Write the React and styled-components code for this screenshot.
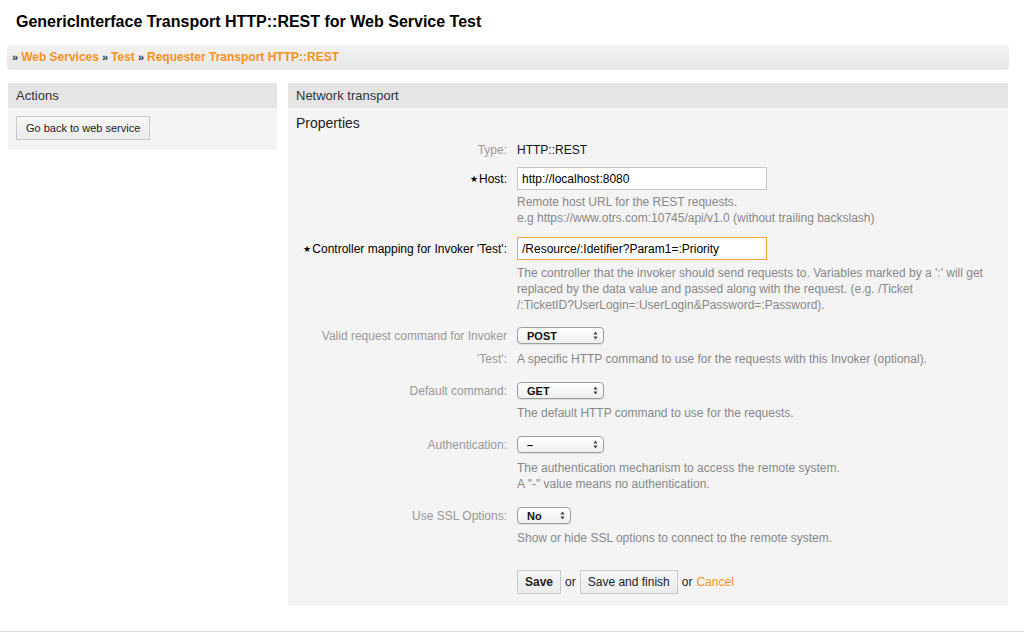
import React from "react";
import styled, { createGlobalStyle } from "styled-components";

const Global = createGlobalStyle`
  html, body { margin: 0; padding: 0; background: #fff; }
  body { font-family: "Liberation Sans", Arial, sans-serif; font-size: 12px; color: #000; }
  * { box-sizing: border-box; }
`;

const Page = styled.div`
  width: 1024px;
  height: 632px;
  overflow: hidden;
  display: flex;
  flex-direction: column;
`;

const Title = styled.h1`
  margin: 0;
  padding: 13px 0 0 16px;
  height: 45px;
  font-size: 16px;
  font-weight: bold;
  color: #000;
  line-height: 18px;
`;

const Breadcrumb = styled.div`
  margin: 0 15px 0 7px;
  height: 24px;
  border-radius: 4px;
  background: linear-gradient(#f1f2f1, #e6e8e7);
  box-shadow: 0 1px 1px rgba(0,0,0,0.08);
  display: flex;
  align-items: center;
  padding-left: 5px;
  font-weight: bold;
  font-size: 12px;
`;

const Sep = styled.span`
  color: #333;
  font-size: 11px;
  margin: 0 3px 0 0;
`;

const Crumb = styled.a`
  color: #f7921e;
  text-decoration: none;
  margin-right: 3px;
`;

const Columns = styled.div`
  display: flex;
  align-items: flex-start;
  gap: 11px;
  margin: 14px 16px 0 8px;
`;

const Box = styled.section`
  background: #f4f4f4;
  width: ${(p) => p.$width || "auto"};
  flex: ${(p) => (p.$grow ? "1" : "none")};
`;

const BoxHeader = styled.div`
  height: 25px;
  background: #e5e5e5;
  color: #333;
  font-size: 13px;
  line-height: 25px;
  padding-left: 8px;
`;

const BoxBody = styled.div`
  padding: ${(p) => p.$pad || "8px"};
`;

const Button = styled.button`
  font-family: "Liberation Sans", Arial, sans-serif;
  font-size: ${(p) => p.$fs || 12}px;
  font-weight: ${(p) => (p.$primary ? "bold" : "normal")};
  color: #222;
  height: 24px;
  padding: 0 ${(p) => p.$px || 8}px;
  border: 1px solid #c9c9c9;
  background: linear-gradient(#f6f6f6, #ececec);
  border-radius: 0;
  cursor: pointer;
`;

const Heading = styled.h2`
  margin: 0;
  font-size: 14px;
  font-weight: normal;
  color: #222;
  line-height: 18px;
`;

const Row = styled.div`
  display: grid;
  grid-template-columns: 211px 1fr;
  column-gap: 10px;
  align-items: center;
  margin-top: ${(p) => p.$mt || 0}px;
`;

const Label = styled.div`
  text-align: right;
  color: ${(p) => (p.$required ? "#000" : "#999")};
  font-size: 12px;
  line-height: 16px;
  white-space: nowrap;
`;

const Star = styled.span`
  font-size: 9px;
  margin-right: 1px;
  vertical-align: 1px;
`;

const Value = styled.div`
  font-size: 12px;
  line-height: 16px;
  color: #111;
`;

const Hint = styled.div`
  color: #888;
  font-size: 12px;
  line-height: 16px;
`;

const TextInput = styled.input`
  width: 250px;
  height: 23px;
  border: 1px solid ${(p) => (p.$error ? "#f7a040" : "#c6c6c6")};
  background: #fff;
  font-family: "Liberation Sans", Arial, sans-serif;
  font-size: 12px;
  color: #000;
  padding: 0 4px;
  outline: none;
  display: block;
`;

const SelectBox = styled.div`
  width: ${(p) => p.$w}px;
  height: 17px;
  border: 1px solid #9e9e9e;
  border-radius: 4px;
  background: linear-gradient(#ffffff, #efefef);
  box-shadow: 0 1px 1px rgba(0,0,0,0.1);
  display: flex;
  align-items: center;
  justify-content: space-between;
  padding: 0 5px 0 9px;
  font-size: 11px;
  color: #111;
  font-weight: bold;
`;

const Actions = styled.div`
  display: flex;
  align-items: center;
  gap: 4px;
  color: #222;
  font-size: 12px;
`;

const CancelLink = styled.a`
  color: #f7921e;
  text-decoration: none;
`;

const Footer = styled.div`
  margin-top: auto;
  border-top: 1px solid #dadada;
  height: 1px;
`;

function Arrows() {
  return (
    <svg width="5" height="9" viewBox="0 0 5 9">
      <path d="M2.5 0.5 L4.6 3.4 L0.4 3.4 Z" fill="#444" />
      <path d="M2.5 8.5 L4.6 5.6 L0.4 5.6 Z" fill="#444" />
    </svg>
  );
}

function Select({ value, width }) {
  return (
    <SelectBox $w={width}>
      <span>{value}</span>
      <Arrows />
    </SelectBox>
  );
}

export default function App() {
  return (
    <Page>
      <Global />
      <Title>GenericInterface Transport HTTP::REST for Web Service Test</Title>
      <Breadcrumb>
        <Sep>»</Sep>
        <Crumb href="#">Web Services</Crumb>
        <Sep>»</Sep>
        <Crumb href="#">Test</Crumb>
        <Sep>»</Sep>
        <Crumb href="#">Requester Transport HTTP::REST</Crumb>
      </Breadcrumb>
      <Columns>
        <Box $width="269px">
          <BoxHeader>Actions</BoxHeader>
          <BoxBody $pad="8px 8px 10px 8px">
            <Button $px={9} $fs={11}>Go back to web service</Button>
          </BoxBody>
        </Box>
        <Box $grow>
          <BoxHeader>Network transport</BoxHeader>
          <BoxBody $pad="6px 8px 12px 8px">
            <Heading>Properties</Heading>
            <Row $mt={10}>
              <Label>Type:</Label>
              <Value>HTTP::REST</Value>
            </Row>
            <Row $mt={9}>
              <Label $required>
                <Star>★</Star>Host:
              </Label>
              <TextInput defaultValue="http://localhost:8080" />
            </Row>
            <Row $mt={4}>
              <span />
              <Hint>
                Remote host URL for the REST requests.
                <br />
                e.g https://www.otrs.com:10745/api/v1.0 (without trailing backslash)
              </Hint>
            </Row>
            <Row $mt={11}>
              <Label $required>
                <Star>★</Star>Controller mapping for Invoker 'Test':
              </Label>
              <TextInput $error defaultValue="/Resource/:Idetifier?Param1=:Priority" />
            </Row>
            <Row $mt={5}>
              <span />
              <Hint>
                The controller that the invoker should send requests to. Variables marked by a ':' will get
                <br />
                replaced by the data value and passed along with the request. (e.g. /Ticket
                <br />
                /:TicketID?UserLogin=:UserLogin&amp;Password=:Password).
              </Hint>
            </Row>
            <Row $mt={14}>
              <Label>Valid request command for Invoker</Label>
              <Select value="POST" width={87} />
            </Row>
            <Row $mt={7}>
              <Label>'Test':</Label>
              <Hint>A specific HTTP command to use for the requests with this Invoker (optional).</Hint>
            </Row>
            <Row $mt={15}>
              <Label>Default command:</Label>
              <Select value="GET" width={87} />
            </Row>
            <Row $mt={6}>
              <span />
              <Hint>The default HTTP command to use for the requests.</Hint>
            </Row>
            <Row $mt={15}>
              <Label>Authentication:</Label>
              <Select value="–" width={87} />
            </Row>
            <Row $mt={7}>
              <span />
              <Hint>
                The authentication mechanism to access the remote system.
                <br />
                A "-" value means no authentication.
              </Hint>
            </Row>
            <Row $mt={15}>
              <Label>Use SSL Options:</Label>
              <Select value="No" width={54} />
            </Row>
            <Row $mt={6}>
              <span />
              <Hint>Show or hide SSL options to connect to the remote system.</Hint>
            </Row>
            <Row $mt={24}>
              <span />
              <Actions>
                <Button $primary $px={7}>Save</Button>
                <span>or</span>
                <Button $px={7}>Save and finish</Button>
                <span>or</span>
                <CancelLink href="#">Cancel</CancelLink>
              </Actions>
            </Row>
          </BoxBody>
        </Box>
      </Columns>
      <Footer />
    </Page>
  );
}
